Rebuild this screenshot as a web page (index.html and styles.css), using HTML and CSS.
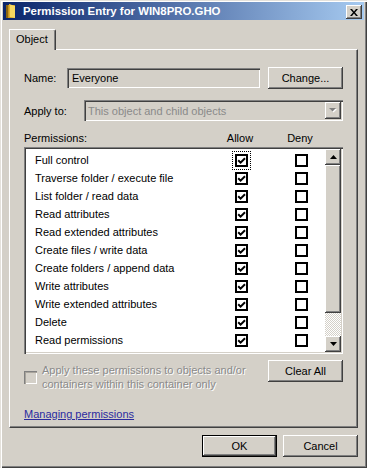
FILE: index.html
```html
<!DOCTYPE html>
<html>
<head>
<meta charset="utf-8">
<title>Permission Entry</title>
<link rel="stylesheet" href="styles.css">
</head>
<body>
<svg class="defs" width="0" height="0" aria-hidden="true">
  <defs>
    <symbol id="chk" viewBox="0 0 9 9">
      <path d="M1.2 4.2 L3.6 6.6 L8 2.2" fill="none" stroke="#000" stroke-width="2"/>
    </symbol>
  </defs>
</svg>
<div class="window">
  <div class="titlebar">
    <svg class="ticon" viewBox="0 0 10 14" width="10" height="14">
      <rect x="0" y="1" width="9" height="13" fill="#c8941c"/>
      <rect x="0" y="1" width="2" height="13" fill="#8a6410"/>
      <polygon points="3,0 9,2 9,14 3,13" fill="#f8d860"/>
      <polygon points="3,0 4,0 4,13 3,13" fill="#e0b030"/>
    </svg>
    <span class="title">Permission Entry for WIN8PRO.GHO</span>
    <span class="closebtn">
      <svg viewBox="0 0 8 7" width="8" height="7"><path d="M0 0 L2 0 L4 2.4 L6 0 L8 0 L5 3.5 L8 7 L6 7 L4 4.6 L2 7 L0 7 L3 3.5 Z" fill="#000"/></svg>
    </span>
  </div>
  <div class="client">
    <div class="tabs"><div class="tab">Object</div></div>
    <div class="panel">
      <div class="name-row">
        <span class="name-lbl">Name:</span>
        <div class="textbox">Everyone</div>
        <button class="btn change-btn">Change...</button>
      </div>
      <div class="apply-row">
        <span class="apply-lbl">Apply to:</span>
        <div class="combo">
          <span class="combo-text">This object and child objects</span>
          <span class="combo-btn">
            <svg viewBox="0 0 8 5" width="8" height="5"><polygon points="1,1 8,1 4.5,4.5" fill="#fff"/><polygon points="0,0 7,0 3.5,3.5" fill="#808080"/></svg>
          </span>
        </div>
      </div>
      <div class="perm-head">
        <span class="ph-label">Permissions:</span>
        <span class="ph-allow">Allow</span>
        <span class="ph-deny">Deny</span>
      </div>
      <div class="listbox">
        <div class="rows">
          <div class="prow"><span class="pname">Full control</span><span class="cb focus"><svg><use href="#chk"/></svg></span><span class="cb deny"></span></div>
          <div class="prow"><span class="pname">Traverse folder / execute file</span><span class="cb"><svg><use href="#chk"/></svg></span><span class="cb deny"></span></div>
          <div class="prow"><span class="pname">List folder / read data</span><span class="cb"><svg><use href="#chk"/></svg></span><span class="cb deny"></span></div>
          <div class="prow"><span class="pname">Read attributes</span><span class="cb"><svg><use href="#chk"/></svg></span><span class="cb deny"></span></div>
          <div class="prow"><span class="pname">Read extended attributes</span><span class="cb"><svg><use href="#chk"/></svg></span><span class="cb deny"></span></div>
          <div class="prow"><span class="pname">Create files / write data</span><span class="cb"><svg><use href="#chk"/></svg></span><span class="cb deny"></span></div>
          <div class="prow"><span class="pname">Create folders / append data</span><span class="cb"><svg><use href="#chk"/></svg></span><span class="cb deny"></span></div>
          <div class="prow"><span class="pname">Write attributes</span><span class="cb"><svg><use href="#chk"/></svg></span><span class="cb deny"></span></div>
          <div class="prow"><span class="pname">Write extended attributes</span><span class="cb"><svg><use href="#chk"/></svg></span><span class="cb deny"></span></div>
          <div class="prow"><span class="pname">Delete</span><span class="cb"><svg><use href="#chk"/></svg></span><span class="cb deny"></span></div>
          <div class="prow"><span class="pname">Read permissions</span><span class="cb"><svg><use href="#chk"/></svg></span><span class="cb deny"></span></div>
          <div class="prow"><span class="pname"></span><span class="cb"><svg><use href="#chk"/></svg></span><span class="cb deny"></span></div>
        </div>
        <div class="vscroll">
          <div class="sb-btn"><svg viewBox="0 0 7 4" width="7" height="4"><polygon points="3.5,0 7,4 0,4" fill="#000"/></svg></div>
          <div class="sb-thumb"></div>
          <div class="sb-track"></div>
          <div class="sb-btn"><svg viewBox="0 0 7 4" width="7" height="4"><polygon points="0,0 7,0 3.5,4" fill="#000"/></svg></div>
        </div>
      </div>
      <div class="bottom-row">
        <div class="inherit">
          <span class="cb-dis"></span>
          <span class="dis-text">Apply these permissions to objects and/or<br>containers within this container only</span>
        </div>
        <button class="btn">Clear All</button>
      </div>
      <a class="link" href="#">Managing permissions</a>
    </div>
    <div class="dlg-buttons">
      <button class="btn default">OK</button>
      <button class="btn">Cancel</button>
    </div>
  </div>
</div>
</body>
</html>
```
FILE: styles.css
```css
* { box-sizing: border-box; }
html, body { margin: 0; padding: 0; }
body {
  width: 367px;
  height: 468px;
  overflow: hidden;
  background: #d4d0c8;
  font-family: "Liberation Sans", Arial, sans-serif;
  font-size: 11px;
  color: #000;
}
.defs { position: absolute; width: 0; height: 0; overflow: hidden; }

.window {
  width: 367px;
  height: 468px;
  background: #d4d0c8;
  padding: 2px 3px 3px 3px;
  box-shadow: inset 1px 1px #e4e1db, inset 2px 2px #fff, inset -1px -1px #404040, inset -2px -2px #808080;
  display: flex;
  flex-direction: column;
}

.titlebar {
  height: 18px;
  display: flex;
  align-items: center;
  padding: 0 2px 0 3px;
  background: linear-gradient(to right, #0a246a, #a6caf0);
}
.ticon { flex: none; margin-right: 7px; }
.title {
  flex: 1;
  color: #fff;
  font-weight: bold;
  font-size: 11.4px;
  white-space: nowrap;
}
.closebtn {
  width: 16px;
  height: 14px;
  background: #d4d0c8;
  box-shadow: inset -1px -1px #404040, inset 1px 1px #fff, inset -2px -2px #808080;
  display: flex;
  align-items: center;
  justify-content: center;
  align-self: flex-end;
  margin-bottom: 1px;
}

.client {
  flex: 1;
  padding: 9px 6px 0 6px;
  display: flex;
  flex-direction: column;
}
.tabs { display: flex; }
.tab {
  width: 47px;
  height: 21px;
  margin-bottom: -1px;
  position: relative;
  z-index: 1;
  background: #d4d0c8;
  border-top: 1px solid #fff;
  border-left: 1px solid #fff;
  border-right: 1px solid #404040;
  border-top-right-radius: 2px;
  box-shadow: inset -1px 0 #808080;
  padding-left: 6px;
  line-height: 19px;
}
.panel {
  height: 379px;
  background: #d4d0c8;
  border-top: 1px solid #fff;
  border-left: 1px solid #fff;
  border-right: 1px solid #404040;
  border-bottom: 1px solid #404040;
  box-shadow: inset -1px -1px #808080;
  padding: 17px 14px 0 14px;
  display: flex;
  flex-direction: column;
}

.name-row { height: 22px; display: flex; align-items: center; }
.name-lbl { width: 43px; }
.textbox {
  width: 193px;
  height: 20px;
  line-height: 20px;
  padding-left: 5px;
  background: #d4d0c8;
  box-shadow: inset 1px 1px #808080, inset 2px 2px #404040, inset -1px -1px #fff, inset -2px -2px #d4d0c8;
}
.change-btn { margin-left: 8px; }

.btn {
  font: inherit;
  width: 75px;
  height: 22px;
  background: #d4d0c8;
  border: none;
  padding: 0;
  color: #000;
  box-shadow: inset -1px -1px #404040, inset 1px 1px #fff, inset -2px -2px #808080;
}
.btn.default {
  box-shadow: inset 0 0 0 1px #000, inset -2px -2px #404040, inset 2px 2px #fff, inset -3px -3px #808080;
}

.apply-row { margin-top: 11px; height: 21px; display: flex; align-items: center; }
.apply-lbl { width: 60px; }
.combo {
  width: 259px;
  height: 21px;
  display: flex;
  align-items: center;
  padding: 2px;
  background: #d4d0c8;
  box-shadow: inset 1px 1px #808080, inset 2px 2px #404040, inset -1px -1px #fff, inset -2px -2px #d4d0c8;
}
.combo-text { flex: 1; color: #8a8a8a; padding-left: 2px; }
.combo-btn {
  width: 16px;
  height: 17px;
  display: flex;
  align-items: center;
  justify-content: center;
  background: #d4d0c8;
  box-shadow: inset -1px -1px #404040, inset 1px 1px #fff, inset -2px -2px #808080;
}

.perm-head { margin-top: 10px; height: 14px; line-height: 14px; display: flex; padding-right: 23px; }
.ph-label { flex: 1; }
.ph-allow { width: 40px; text-align: center; }
.ph-deny { width: 40px; margin-left: 20px; text-align: center; }

.listbox {
  margin-top: 2px;
  height: 207px;
  display: flex;
  padding: 2px;
  background: #fff;
  box-shadow: inset 1px 1px #808080, inset 2px 2px #404040, inset -1px -1px #fff, inset -2px -2px #d4d0c8;
}
.rows { flex: 1; overflow: hidden; padding-top: 2px; }
.prow {
  height: 18px;
  display: flex;
  align-items: center;
  padding-left: 9px;
  padding-right: 17px;
  white-space: nowrap;
}
.pname { flex: 1; }
.cb {
  width: 13px;
  height: 13px;
  flex: none;
  border: 2px solid #000;
  background: #fff;
  display: flex;
}
.cb svg { width: 9px; height: 9px; }
.cb.deny { margin-left: 47px; }
.cb.focus { outline: 1px dotted #000; outline-offset: 2px; }

.vscroll { width: 16px; display: flex; flex-direction: column; }
.sb-btn {
  height: 16px;
  display: flex;
  align-items: center;
  justify-content: center;
  background: #d4d0c8;
  box-shadow: inset -1px -1px #404040, inset 1px 1px #fff, inset -2px -2px #808080;
}
.sb-thumb {
  height: 148px;
  background: #d4d0c8;
  box-shadow: inset -1px -1px #404040, inset 1px 1px #fff, inset -2px -2px #808080;
}
.sb-track {
  flex: 1;
  background: repeating-conic-gradient(#fff 0 25%, #d4d0c8 0 50%) 0 0 / 2px 2px;
}

.bottom-row {
  margin-top: 6px;
  display: flex;
  justify-content: space-between;
  align-items: flex-start;
}
.inherit { margin-top: 3px; display: flex; align-items: center; }
.cb-dis {
  width: 13px;
  height: 13px;
  margin-right: 5px;
  background: #d4d0c8;
  box-shadow: inset 1px 1px #808080, inset 2px 2px #a8a49c, inset -1px -1px #fff;
}
.dis-text { color: #8a8a8a; text-shadow: 1px 1px #fff; line-height: 14px; }

.link {
  margin-top: 16px;
  align-self: flex-start;
  line-height: 14px;
  color: #2b2ba0;
  text-decoration: underline;
}

.dlg-buttons { margin-top: 7px; display: flex; justify-content: flex-end; gap: 6px; }
```
